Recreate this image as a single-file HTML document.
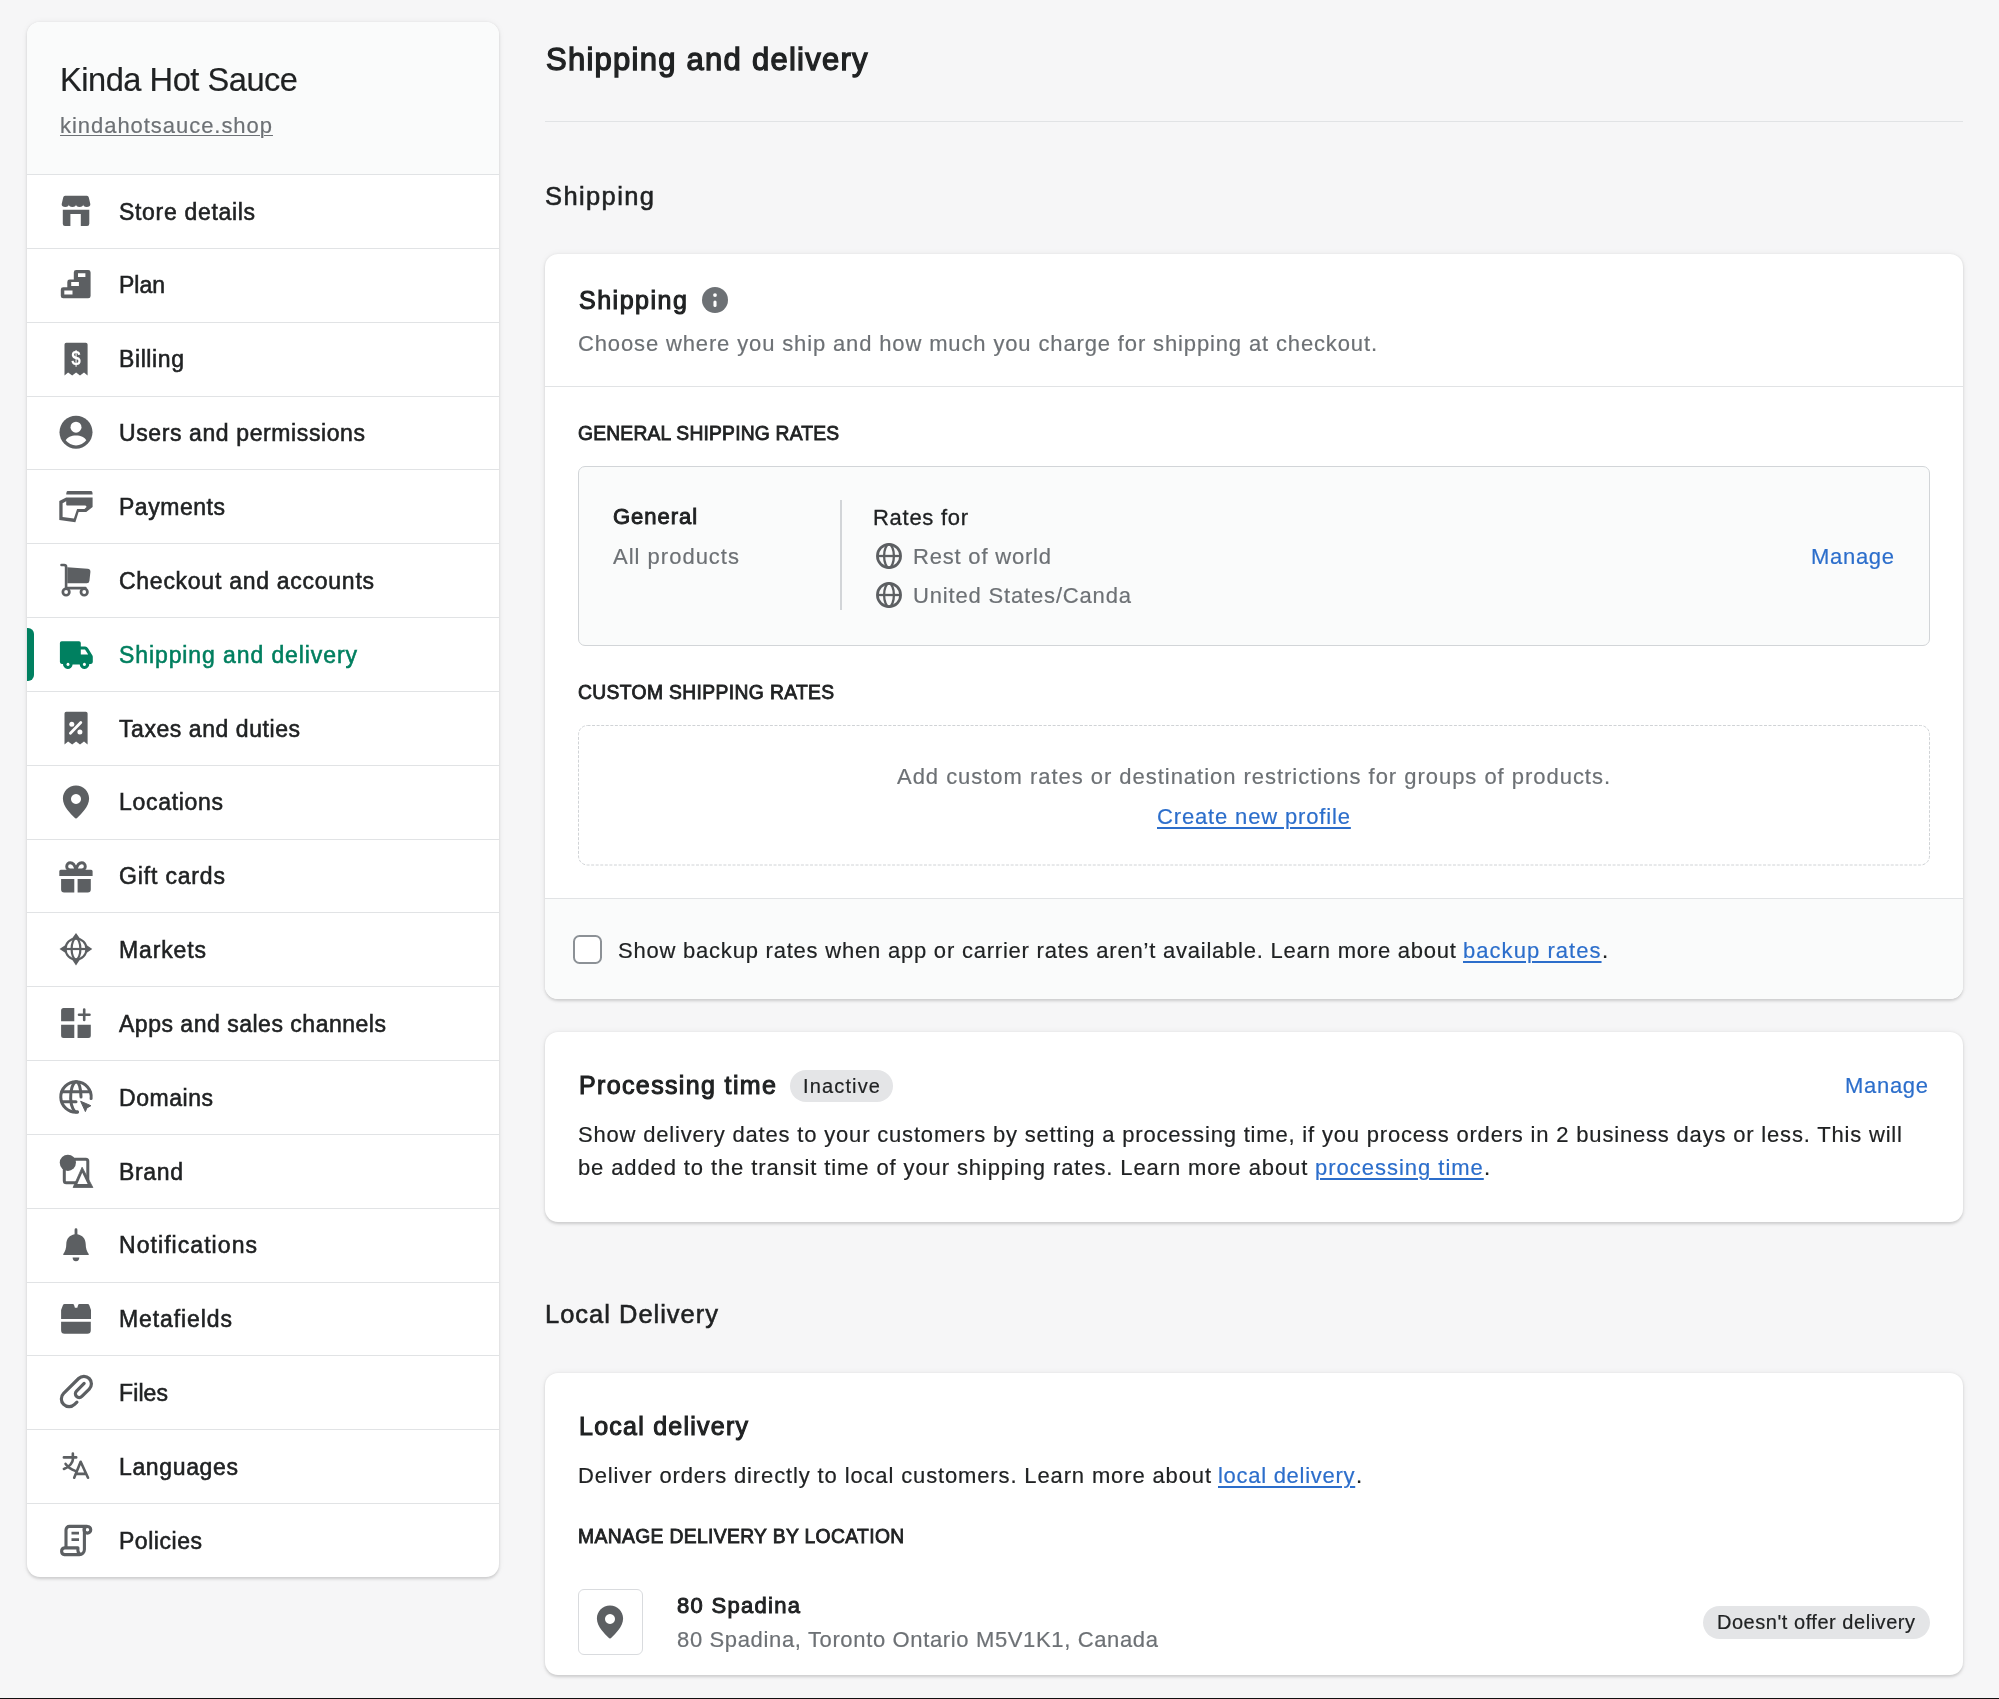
<!DOCTYPE html>
<html lang="en"><head><meta charset="utf-8"><title>Shipping and delivery</title>
<style>
*{box-sizing:border-box;margin:0;padding:0}
html,body{width:1999px;height:1699px;overflow:hidden;background:#f6f6f7}
body{position:relative;font-family:"Liberation Sans",Arial,sans-serif;color:#202223;-webkit-font-smoothing:antialiased}
.t{display:block;text-decoration:none;position:absolute;white-space:nowrap;font-weight:400;will-change:transform;-webkit-text-stroke:0.2px currentColor}
.wm{-webkit-text-stroke:0.55px currentColor}
.wl{-webkit-text-stroke:0.3px currentColor}
.wb{font-weight:700;-webkit-text-stroke:0}
.ws{}
.u{text-decoration:underline;text-decoration-thickness:1.5px;text-underline-offset:3px}
.card{position:absolute;background:#fff;border-radius:13px;box-shadow:0 0 7.7px rgba(23,24,24,.05),0 1.5px 3px rgba(0,0,0,.15)}
#side{left:27px;top:22px;width:472px;height:1555px;overflow:hidden}
#sidehead{position:absolute;left:0;top:0;width:472px;height:152px;background:#fafbfb}
.sep{position:absolute;left:0;width:472px;height:1px;background:#e1e3e5}
#active{position:absolute;left:0;top:605.7px;width:6.5px;height:53px;background:#008060;border-radius:0 6px 6px 0}
.ic{position:absolute;display:block;overflow:visible;will-change:transform}
#hr{position:absolute;left:545px;top:121px;width:1418px;height:1px;background:#e1e3e5}
#c1{left:545px;top:254px;width:1418px;height:744.6px;overflow:hidden}
#c2{left:545px;top:1032px;width:1418px;height:190px}
#c3{left:545px;top:1373px;width:1418px;height:302px}
.hl{position:absolute;left:0;width:1418px;height:1px;background:#e1e3e5}
#c1foot{position:absolute;left:0;top:645px;width:1418px;height:100px;background:#fafbfb}
#genbox{position:absolute;left:33px;top:212px;width:1352px;height:180px;background:#fafbfb;border:1.3px solid #d2d5d8;border-radius:7px}
#vdiv{position:absolute;left:295px;top:246px;width:2px;height:110px;background:#d2d5d8}
#dashbox{position:absolute;left:32px;top:470px;display:block}
#chk{position:absolute;left:28px;top:681px;width:29px;height:29px;border:2.8px solid #8c9196;border-radius:6.5px;background:#fff}
.badge{position:absolute;background:#e4e5e7;border-radius:20px}
#locbox{position:absolute;left:32.8px;top:216px;width:65.5px;height:65.8px;border:1.2px solid #d9dbde;border-radius:6px;background:#fff}
#bottom{position:absolute;left:0;top:1697.6px;width:1999px;height:1.4px;background:#111}

</style></head>
<body>
<div id="side" class="card">
<div id="sidehead"></div>
<div class="sep" style="top:152px"></div>
<div class="sep" style="top:226px"></div>
<div class="sep" style="top:300px"></div>
<div class="sep" style="top:374px"></div>
<div class="sep" style="top:447px"></div>
<div class="sep" style="top:521px"></div>
<div class="sep" style="top:595px"></div>
<div class="sep" style="top:669px"></div>
<div class="sep" style="top:743px"></div>
<div class="sep" style="top:817px"></div>
<div class="sep" style="top:890px"></div>
<div class="sep" style="top:964px"></div>
<div class="sep" style="top:1038px"></div>
<div class="sep" style="top:1112px"></div>
<div class="sep" style="top:1186px"></div>
<div class="sep" style="top:1260px"></div>
<div class="sep" style="top:1333px"></div>
<div class="sep" style="top:1407px"></div>
<div class="sep" style="top:1481px"></div>
<div id="active"></div>
</div>
<div id="hr"></div>
<div id="c1" class="card">
<div class="hl" style="top:132px"></div>
<div id="genbox"></div>
<div id="vdiv"></div>
<svg id="dashbox" width="1354" height="143" viewBox="0 0 1354 143"><rect x="1.5" y="1.5" width="1351" height="139.5" rx="9" fill="none" stroke="#d0d3d6" stroke-width="1" stroke-dasharray="3 1.56"/></svg>
<div id="c1foot"></div>
<div class="hl" style="top:644px"></div>
<div id="chk"></div>
</div>
<div id="c2" class="card"></div>
<div class="badge" style="left:790px;top:1069.8px;width:103.4px;height:32.6px"></div>
<div id="c3" class="card">
<div id="locbox"></div>
</div>
<div class="badge" style="left:1703px;top:1606.3px;width:227px;height:32.5px"></div>
<svg class="ic" style="left:56.00px;top:190.92px;width:40px;height:40px;color:#5c5f62" viewBox="-20 -20 40 40" fill="#5c5f62"><path d="M-10.8 -15.2h21.6a2 2 0 0 1 2 1.6l1.5 6.7v.5a3.57 2.3 0 0 1-7.15 0a3.57 2.3 0 0 1-7.15 0a3.57 2.3 0 0 1-7.15 0a3.57 2.3 0 0 1-7.15 0v-.5l1.5-6.7a2 2 0 0 1 2-1.6z"/><path d="M-13.2 -1.2h26.5v14a2.2 2.2 0 0 1-2.2 2.2h-6.3v-11.9h-10.4v11.9h-5.4a2.2 2.2 0 0 1-2.2-2.2z"/></svg>
<svg class="ic" style="left:56.00px;top:264.76px;width:40px;height:40px;color:#5c5f62" viewBox="-20 -20 40 40" fill="#5c5f62"><path fill-rule="evenodd" d="M.2 -15h12a2.4 2.4 0 0 1 2.4 2.4v23.5a2.4 2.4 0 0 1-2.4 2.4h-25a2.4 2.4 0 0 1-2.4-2.4v-6.2a2.4 2.4 0 0 1 2.4-2.4h4.1v-5.4a2.4 2.4 0 0 1 2.4-2.4h4.1v-7.1a2.4 2.4 0 0 1 2.4-2.4zM2 -11.7h7.4v3.6h-7.4z M-4.8 -2.9h7.7v3.9h-7.7z M-11.7 5.5h8.2v3.9h-8.2z"/></svg>
<svg class="ic" style="left:56.00px;top:338.61px;width:40px;height:40px;color:#5c5f62" viewBox="-20 -20 40 40" fill="#5c5f62"><path d="M-9.7 -16.3h19.5a1.8 1.8 0 0 1 1.8 1.8v30.9l-3.6 -2.8l-4 2.8l-3.9 -2.8l-3.9 2.8l-4.1 -2.8l-3.6 2.8v-30.9a1.8 1.8 0 0 1 1.8-1.8z"/><text x="0" y="6.4" text-anchor="middle" font-family="Liberation Sans, Arial, sans-serif" font-weight="700" font-size="21" fill="#fff" transform="scale(0.82 1)">$</text></svg>
<svg class="ic" style="left:56.00px;top:412.45px;width:40px;height:40px;color:#5c5f62" viewBox="-20 -20 40 40" fill="#5c5f62"><circle cx="0" cy="0.2" r="16.5"/><circle cx="0" cy="-4.8" r="5.5" fill="#fff"/><path fill="#fff" d="M-10.3 8.3c1.6-3 5.5-4.8 10.3-4.8s8.7 1.8 10.3 4.8a12.9 12.9 0 0 1-20.6 0z"/></svg>
<svg class="ic" style="left:56.00px;top:486.29px;width:40px;height:40px;color:#5c5f62" viewBox="-20 -20 40 40" fill="#5c5f62"><path d="M-8.200 -15H15Q16 -15 16.300 -14L16.600 -12Q16.700 -11.400 16 -11.400H-9.200Q-9.900 -11.400 -9.800 -12L-9.400 -14Q-9.200 -15 -8.200 -15z"/><path fill-rule="evenodd" d="M-9.8 -8.6h26.4v9.6l-6.4 5h-7.6l-3.25 10.3l-16.05 -2.3v-18.9z M-13.4 -2.8l3.6 -2v3.4a.9 .9 0 0 0 .9 .9h18.1a1.6 1.6 0 0 1 1.3 1.5l-2 1.9h-7.4l-3.2 9.6l-11.3 -1.6z"/></svg>
<svg class="ic" style="left:56.00px;top:560.13px;width:40px;height:40px;color:#5c5f62" viewBox="-20 -20 40 40" fill="#5c5f62"><path fill="none" stroke="currentColor" stroke-width="2.6" stroke-linecap="round" stroke-linejoin="round" d="M-14.5 -15h2.6a2 2 0 0 1 2 2v21.1h19.3"/><path d="M-8.7 -12.8l20.3 1.5a3 3 0 0 1 2.8 3.3l-1 9a2.6 2.6 0 0 1-2.6 2.3h-19.5z"/><circle cx="-9.9" cy="12" r="3.25" fill="none" stroke="currentColor" stroke-width="2.7"/><circle cx="8.2" cy="12" r="3.25" fill="none" stroke="currentColor" stroke-width="2.7"/></svg>
<svg class="ic" style="left:56.00px;top:633.97px;width:40px;height:40px;color:#008060" viewBox="-20 -20 40 40" fill="#008060"><g transform="translate(0.2 0.6)"><path fill-rule="evenodd" d="M-14.7 -13.4h17.5a1.8 1.8 0 0 1 1.8 1.8v3.6h4.3a3.4 3.4 0 0 1 2.9 1.6l4.3 7a3.5 3.5 0 0 1 .5 1.8v5.1a1.8 1.8 0 0 1-1.8 1.8h-1.7a4.8 4.8 0 0 1-9.6 .5 h-7.1a4.8 4.8 0 0 1-9.6 -.5h-1.3a1.8 1.8 0 0 1-1.8-1.8v-19.1a1.8 1.8 0 0 1 1.8-1.8zM4.6 -5.2h4.2l3.2 5h-7.4z M-8.2 8.25a1.55 1.55 0 1 0 .01 0z M8.2 8.25a1.55 1.55 0 1 0 .01 0z"/></g></svg>
<svg class="ic" style="left:56.00px;top:707.82px;width:40px;height:40px;color:#5c5f62" viewBox="-20 -20 40 40" fill="#5c5f62"><path d="M-9.7 -16.3h19.5a1.8 1.8 0 0 1 1.8 1.8v30.9l-3.6 -2.8l-4 2.8l-3.9 -2.8l-3.9 2.8l-4.1 -2.8l-3.6 2.8v-30.9a1.8 1.8 0 0 1 1.8-1.8z"/><circle cx="-4.2" cy="-3.8" r="2.5" fill="#fff"/><circle cx="3.9" cy="4.1" r="2.5" fill="#fff"/><path d="M4.8 -5.5l-10.4 10.7" stroke="#fff" stroke-width="2.8" stroke-linecap="round"/></svg>
<svg class="ic" style="left:56.00px;top:781.66px;width:40px;height:40px;color:#5c5f62" viewBox="-20 -20 40 40" fill="#5c5f62"><path fill-rule="evenodd" d="M0 -16.4c7.3 0 13.1 5.7 13.1 13c0 8.2-8 15.400-11.500 19a2.200 2.200 0 0 1-3.200 0c-3.500-3.600-11.500-10.800-11.500-19c0-7.300 5.800-13 13.100-13z M0 -8a5 5 0 1 0 .01 0z"/></svg>
<svg class="ic" style="left:56.00px;top:855.50px;width:40px;height:40px;color:#5c5f62" viewBox="-20 -20 40 40" fill="#5c5f62"><path d="M-15.2 -6.25h30.300a1.5 1.5 0 0 1 1.500 1.500v4.700h-33.300v-4.700a1.500 1.500 0 0 1 1.500-1.500z"/><path d="M-14.9 3h13.200v13.400h-10.200a3 3 0 0 1-3-3z M1.600 3h13.200v10.400a3 3 0 0 1-3 3h-10.200z"/><path fill="none" stroke="currentColor" stroke-width="2.9" d="M0 -6c-1-4.5-3.200-7.200-5.700-7.200a3.600 3.600 0 0 0 0 7.200z M0 -6c1-4.500 3.200-7.200 5.700-7.200a3.600 3.600 0 0 1 0 7.200z"/></svg>
<svg class="ic" style="left:56.00px;top:929.34px;width:40px;height:40px;color:#5c5f62" viewBox="-20 -20 40 40" fill="#5c5f62"><g fill="none" stroke="currentColor" stroke-width="2.2"><circle cx="0" cy="0" r="10.500"/><ellipse cx="0" cy="0" rx="4.400" ry="10.500"/><path d="M-10.500 0h21"/></g><path d="M-3.800 -10.800l3.800 -5.100l3.800 5.100z M-3.800 10.800l3.800 5.600l3.800 -5.600z M-10.800 -3.800l-5.700 3.800l5.700 3.800z M10.800 -3.800l5.500 3.800l-5.500 3.800z"/></svg>
<svg class="ic" style="left:56.00px;top:1003.18px;width:40px;height:40px;color:#5c5f62" viewBox="-20 -20 40 40" fill="#5c5f62"><path d="M-12.400 -15.100h10.700v13.300h-13.200v-10.800a2.500 2.500 0 0 1 2.500-2.500z M-14.900 1.700h13.200v13.250h-10.700a2.500 2.500 0 0 1-2.500-2.500z M1.550 1.700h13.250v10.750a2.500 2.500 0 0 1-2.500 2.500h-10.750z"/><path fill="none" stroke="currentColor" stroke-width="2.6" stroke-linecap="round" d="M3 -8.200h10.500 M8.200 -13.500v10.500"/></svg>
<svg class="ic" style="left:56.00px;top:1077.03px;width:40px;height:40px;color:#5c5f62" viewBox="-20 -20 40 40" fill="#5c5f62"><g fill="none" stroke="currentColor" stroke-width="3" stroke-linecap="round"><path d="M15.100 1.600a15.200 15.200 0 1 0 -13.700 13.500"/><path d="M-14 -5.200h28 M-14 4.800h14"/><path d="M1.400 15a6.200 15.200 0 0 1 -1.400 -30.200c3 0 5 6.500 5 15.200"/></g><path d="M4.650 4.250l10.300 4.450l-4.150 2.300l-1.400 3.600z" stroke="currentColor" stroke-width="1" stroke-linejoin="round"/></svg>
<svg class="ic" style="left:56.00px;top:1150.87px;width:40px;height:40px;color:#5c5f62" viewBox="-20 -20 40 40" fill="#5c5f62"><rect x="-11.700" y="-11.700" width="23.500" height="23.500" rx="2" fill="none" stroke="currentColor" stroke-width="3"/><circle cx="-8.150" cy="-8.200" r="8.100"/><path d="M6.100 -3.800l10.800 20.300h-19.800z" stroke="currentColor" stroke-width=".8" stroke-linejoin="round"/><path fill="#fff" d="M6.250 1.800l5.400 11.200h-10.300z"/></svg>
<svg class="ic" style="left:56.00px;top:1224.71px;width:40px;height:40px;color:#5c5f62" viewBox="-20 -20 40 40" fill="#5c5f62"><path d="M-1.400 -15.300a1.400 1.400 0 0 1 2.800 0v4.500c4.900 .8 8.300 4.600 8.300 9.800c0 4.500 1.200 7.300 3 10.100a.55 .55 0 0 1-.45 .85h-24.500a.55 .55 0 0 1-.45-.85c1.800-2.800 3-5.600 3-10.100c0-5.200 3.400-9 8.300-9.800z"/><path d="M-3.400 12.500h6.700a3.350 3.700 0 0 1-6.700 0z"/></svg>
<svg class="ic" style="left:56.00px;top:1298.55px;width:40px;height:40px;color:#5c5f62" viewBox="-20 -20 40 40" fill="#5c5f62"><path d="M-14.900 0v-9l1.700-4.600a2 2 0 0 1 1.900-1.300h8a1.500 1.500 0 0 1 1.450 1.100l.75 2.500h2.400l.75-2.500a1.500 1.500 0 0 1 1.450-1.100h8a2 2 0 0 1 1.900 1.300l1.600 4.600v9z"/><path d="M-14.900 2.700h29.700v8.600a3.500 3.500 0 0 1-3.500 3.500h-22.700a3.500 3.500 0 0 1-3.500-3.500z"/></svg>
<svg class="ic" style="left:56.00px;top:1372.39px;width:40px;height:40px;color:#5c5f62" viewBox="-20 -20 40 40" fill="#5c5f62"><g transform="rotate(-45)"><path fill="none" stroke="currentColor" stroke-width="3.200" stroke-linecap="round" d="M-6.500 7.800H-9.800A7.750 7.750 0 0 1 -9.800 -7.700H11.400A7.500 7.500 0 0 1 11.400 7.300H1A3.800 3.800 0 0 1 1 -.3H11.800"/></g></svg>
<svg class="ic" style="left:56.00px;top:1446.24px;width:40px;height:40px;color:#5c5f62" viewBox="-20 -20 40 40" fill="#5c5f62"><g fill="none" stroke="currentColor" stroke-width="2.600" stroke-linecap="round" stroke-linejoin="round"><path d="M-12.100 -8.600h12.300 M-3.150 -12.400v3.800 M-2.700 -8.600c-.5 5.500-3.500 9.500-9.400 11.500 M-10.400 -2.100c2.500 3.500 5.500 5.500 9.700 7"/><path d="M-1.800 11.700l6.450-15.900l7.350 15.900 M.7 7.900h8.100"/></g></svg>
<svg class="ic" style="left:56.00px;top:1520.08px;width:40px;height:40px;color:#5c5f62" viewBox="-20 -20 40 40" fill="#5c5f62"><g fill="none" stroke="currentColor" stroke-width="3.100" stroke-linejoin="round"><path d="M-10 7.850v-17.950a3.500 3.500 0 0 1 3.500-3.500h17.900"/><path d="M8.400 -13.600v23.200a5 5 0 0 1-5 5h-14.800a3.400 3.400 0 0 1 0-6.750h13.300v2.700a4 4 0 0 0 4 4"/><circle cx="11.400" cy="-10.200" r="3.350"/></g><path fill="none" stroke="currentColor" stroke-width="2.800" d="M-4.500 -6.900h7.500 M-4.500 -.45h7.500"/></svg>
<svg class="ic" style="left:869.00px;top:535.50px;width:40px;height:40px;color:#5c5f62" viewBox="-20 -20 40 40" fill="#5c5f62"><g fill="none" stroke="currentColor"><circle cx="0" cy="0" r="11.600" stroke-width="2.700"/><ellipse cx="0" cy="0" rx="4.900" ry="11.600" stroke-width="2.300"/><path d="M-11.600 0h23.200" stroke-width="2.300"/></g></svg>
<svg class="ic" style="left:869.00px;top:575.10px;width:40px;height:40px;color:#5c5f62" viewBox="-20 -20 40 40" fill="#5c5f62"><g fill="none" stroke="currentColor"><circle cx="0" cy="0" r="11.600" stroke-width="2.700"/><ellipse cx="0" cy="0" rx="4.900" ry="11.600" stroke-width="2.300"/><path d="M-11.600 0h23.200" stroke-width="2.300"/></g></svg>
<svg class="ic" style="left:590.40px;top:1601.90px;width:40px;height:40px;color:#5c5f62" viewBox="-20 -20 40 40" fill="#5c5f62"><path fill-rule="evenodd" d="M0 -16.4c7.3 0 13.1 5.7 13.1 13c0 8.2-8 15.400-11.500 19a2.200 2.200 0 0 1-3.200 0c-3.500-3.600-11.500-10.800-11.500-19c0-7.300 5.800-13 13.100-13z M0 -8a5 5 0 1 0 .01 0z"/></svg>
<svg class="ic" style="left:695.2px;top:279.9px;width:40px;height:40px" viewBox="-20 -20 40 40"><circle cx="0" cy="0" r="13" fill="#6d7175"/><circle cx="0" cy="-4.95" r="1.9" fill="#fff"/><rect x="-1.55" y=".45" width="3.1" height="6.5" rx="1.55" fill="#fff"/></svg>
<h2 id="s_title" class="t wr" style="left:60px;top:59.8px;font-size:32.6px;line-height:39px;color:#202223;letter-spacing:-0.465px;">Kinda Hot Sauce</h2>
<a id="s_url" class="t wr" style="left:60px;top:113.3px;font-size:22px;line-height:26px;color:#6d7175;letter-spacing:0.958px;"><span class="u" style="text-decoration-thickness:1.3px;text-underline-offset:2.2px">kindahotsauce.shop</span></a>
<a id="n0" class="t wm" style="left:119px;top:197.621px;font-size:23px;line-height:28px;color:#202223;letter-spacing:0.679px;">Store details</a>
<a id="n1" class="t wm" style="left:119px;top:271.463px;font-size:23px;line-height:28px;color:#202223;letter-spacing:-0.016px;">Plan</a>
<a id="n2" class="t wm" style="left:119px;top:345.305px;font-size:23px;line-height:28px;color:#202223;letter-spacing:0.604px;">Billing</a>
<a id="n3" class="t wm" style="left:119px;top:419.147px;font-size:23px;line-height:28px;color:#202223;letter-spacing:0.604px;">Users and permissions</a>
<a id="n4" class="t wm" style="left:119px;top:492.989px;font-size:23px;line-height:28px;color:#202223;letter-spacing:0.532px;">Payments</a>
<a id="n5" class="t wm" style="left:119px;top:566.832px;font-size:23px;line-height:28px;color:#202223;letter-spacing:0.731px;">Checkout and accounts</a>
<a id="n6" class="t wm" style="left:119px;top:640.674px;font-size:23px;line-height:28px;color:#007f5f;letter-spacing:0.903px;">Shipping and delivery</a>
<a id="n7" class="t wm" style="left:119px;top:714.516px;font-size:23px;line-height:28px;color:#202223;letter-spacing:0.559px;">Taxes and duties</a>
<a id="n8" class="t wm" style="left:119px;top:788.358px;font-size:23px;line-height:28px;color:#202223;letter-spacing:0.692px;">Locations</a>
<a id="n9" class="t wm" style="left:119px;top:862.2px;font-size:23px;line-height:28px;color:#202223;letter-spacing:0.842px;">Gift cards</a>
<a id="n10" class="t wm" style="left:119px;top:936.042px;font-size:23px;line-height:28px;color:#202223;letter-spacing:0.866px;">Markets</a>
<a id="n11" class="t wm" style="left:119px;top:1009.88px;font-size:23px;line-height:28px;color:#202223;letter-spacing:0.512px;">Apps and sales channels</a>
<a id="n12" class="t wm" style="left:119px;top:1083.73px;font-size:23px;line-height:28px;color:#202223;letter-spacing:0.539px;">Domains</a>
<a id="n13" class="t wm" style="left:119px;top:1157.57px;font-size:23px;line-height:28px;color:#202223;letter-spacing:0.656px;">Brand</a>
<a id="n14" class="t wm" style="left:119px;top:1231.41px;font-size:23px;line-height:28px;color:#202223;letter-spacing:1.060px;">Notifications</a>
<a id="n15" class="t wm" style="left:119px;top:1305.25px;font-size:23px;line-height:28px;color:#202223;letter-spacing:0.908px;">Metafields</a>
<a id="n16" class="t wm" style="left:119px;top:1379.09px;font-size:23px;line-height:28px;color:#202223;letter-spacing:0.108px;">Files</a>
<a id="n17" class="t wm" style="left:119px;top:1452.94px;font-size:23px;line-height:28px;color:#202223;letter-spacing:0.645px;">Languages</a>
<a id="n18" class="t wm" style="left:119px;top:1526.78px;font-size:23px;line-height:28px;color:#202223;letter-spacing:0.533px;">Policies</a>
<h1 id="m_title" class="t ws" style="left:545.7px;top:41px;font-size:31px;line-height:37px;color:#202223;letter-spacing:1.258px;-webkit-text-stroke:1.30px currentColor;">Shipping and delivery</h1>
<h2 id="m_h1" class="t wm" style="left:545px;top:180.5px;font-size:25.5px;line-height:31px;color:#202223;letter-spacing:1.391px;">Shipping</h2>
<h3 id="c1_title" class="t ws" style="left:578.525px;top:285px;font-size:25px;line-height:30px;color:#202223;letter-spacing:1.520px;-webkit-text-stroke:1.05px currentColor;">Shipping</h3>
<p id="c1_sub" class="t wr" style="left:578px;top:330.5px;font-size:22px;line-height:26px;color:#6d7175;letter-spacing:0.862px;">Choose where you ship and how much you charge for shipping at checkout.</p>
<h4 id="c1_gsr" class="t ws" style="left:578.405px;top:421.9px;font-size:19.3px;line-height:23px;color:#202223;letter-spacing:0.192px;-webkit-text-stroke:0.81px currentColor;">GENERAL SHIPPING RATES</h4>
<div id="c1_gen" class="t ws" style="left:613.462px;top:504px;font-size:22px;line-height:26px;color:#202223;letter-spacing:0.968px;-webkit-text-stroke:0.92px currentColor;">General</div>
<div id="c1_all" class="t wr" style="left:613px;top:543.5px;font-size:22px;line-height:26px;color:#6d7175;letter-spacing:1.004px;">All products</div>
<div id="c1_rf" class="t wl" style="left:873px;top:504.5px;font-size:22px;line-height:26px;color:#202223;letter-spacing:0.717px;">Rates for</div>
<div id="c1_row" class="t wr" style="left:913px;top:543.5px;font-size:22px;line-height:26px;color:#6d7175;letter-spacing:0.801px;">Rest of world</div>
<div id="c1_usc" class="t wr" style="left:913px;top:582.5px;font-size:22px;line-height:26px;color:#6d7175;letter-spacing:0.832px;">United States/Canda</div>
<a id="c1_man" class="t wr" style="left:1811px;top:543.5px;font-size:22px;line-height:26px;color:#2c6ecb;letter-spacing:0.699px;">Manage</a>
<h4 id="c1_csr" class="t ws" style="left:578.405px;top:680.9px;font-size:19.3px;line-height:23px;color:#202223;letter-spacing:0.364px;-webkit-text-stroke:0.81px currentColor;">CUSTOM SHIPPING RATES</h4>
<p id="c1_add" class="t wr" style="left:897px;top:763.5px;font-size:22px;line-height:26px;color:#6d7175;letter-spacing:0.969px;">Add custom rates or destination restrictions for groups of products.</p>
<a id="c1_cnp" class="t wr" style="left:1157px;top:803.5px;font-size:22px;line-height:26px;color:#2c6ecb;letter-spacing:0.851px;"><span class="u">Create new profile</span></a>
<div id="c1_chk" class="t wr" style="left:618px;top:937.5px;font-size:22px;line-height:26px;color:#202223;letter-spacing:0.782px;">Show backup rates when app or carrier rates aren’t available. Learn more about</div>
<a id="c1_chk_l" class="t wr" style="left:1462.6px;top:937.5px;font-size:22px;line-height:26px;color:#2c6ecb;letter-spacing:1.048px;"><span class="u">backup rates</span></a>
<div id="c1_chk_d" class="t wr" style="left:1601.5px;top:937.5px;font-size:22px;line-height:26px;color:#202223;letter-spacing:0.000px;">.</div>
<h3 id="c2_title" class="t ws" style="left:578.525px;top:1070px;font-size:25px;line-height:30px;color:#202223;letter-spacing:1.364px;-webkit-text-stroke:1.05px currentColor;">Processing time</h3>
<span id="c2_badge" class="t wr" style="left:803px;top:1074px;font-size:20px;line-height:24px;color:#202223;letter-spacing:1.151px;">Inactive</span>
<a id="c2_man" class="t wr" style="left:1845px;top:1072.5px;font-size:22px;line-height:26px;color:#2c6ecb;letter-spacing:0.699px;">Manage</a>
<p id="c2_p1" class="t wr" style="left:578px;top:1121.5px;font-size:22px;line-height:26px;color:#202223;letter-spacing:0.816px;">Show delivery dates to your customers by setting a processing time, if you process orders in 2 business days or less. This will</p>
<p id="c2_p2" class="t wr" style="left:578px;top:1154.5px;font-size:22px;line-height:26px;color:#202223;letter-spacing:0.887px;">be added to the transit time of your shipping rates. Learn more about</p>
<a id="c2_p2_l" class="t wr" style="left:1314.7px;top:1154.5px;font-size:22px;line-height:26px;color:#2c6ecb;letter-spacing:0.981px;"><span class="u">processing time</span></a>
<div id="c2_p2_d" class="t wr" style="left:1484px;top:1154.5px;font-size:22px;line-height:26px;color:#202223;letter-spacing:0.000px;">.</div>
<h2 id="m_h2" class="t wm" style="left:545px;top:1298.5px;font-size:25.5px;line-height:31px;color:#202223;letter-spacing:0.988px;">Local Delivery</h2>
<h3 id="c3_title" class="t ws" style="left:578.525px;top:1411px;font-size:25px;line-height:30px;color:#202223;letter-spacing:1.237px;-webkit-text-stroke:1.05px currentColor;">Local delivery</h3>
<p id="c3_p" class="t wr" style="left:578px;top:1462.5px;font-size:22px;line-height:26px;color:#202223;letter-spacing:0.864px;">Deliver orders directly to local customers. Learn more about</p>
<a id="c3_p_l" class="t wr" style="left:1217.5px;top:1462.5px;font-size:22px;line-height:26px;color:#2c6ecb;letter-spacing:0.718px;"><span class="u">local delivery</span></a>
<div id="c3_p_d" class="t wr" style="left:1355.5px;top:1462.5px;font-size:22px;line-height:26px;color:#202223;letter-spacing:0.000px;">.</div>
<h4 id="c3_mdl" class="t ws" style="left:578.405px;top:1525.3px;font-size:19.3px;line-height:23px;color:#202223;letter-spacing:0.360px;-webkit-text-stroke:0.81px currentColor;">MANAGE DELIVERY BY LOCATION</h4>
<div id="c3_name" class="t ws" style="left:677.462px;top:1593px;font-size:22px;line-height:26px;color:#202223;letter-spacing:1.305px;-webkit-text-stroke:0.92px currentColor;">80 Spadina</div>
<div id="c3_addr" class="t wr" style="left:677px;top:1626.5px;font-size:22px;line-height:26px;color:#6d7175;letter-spacing:0.644px;">80 Spadina, Toronto Ontario M5V1K1, Canada</div>
<span id="c3_badge" class="t wr" style="left:1717px;top:1610px;font-size:20px;line-height:24px;color:#202223;letter-spacing:0.529px;">Doesn't offer delivery</span>
<div id="bottom"></div>
</body></html>
